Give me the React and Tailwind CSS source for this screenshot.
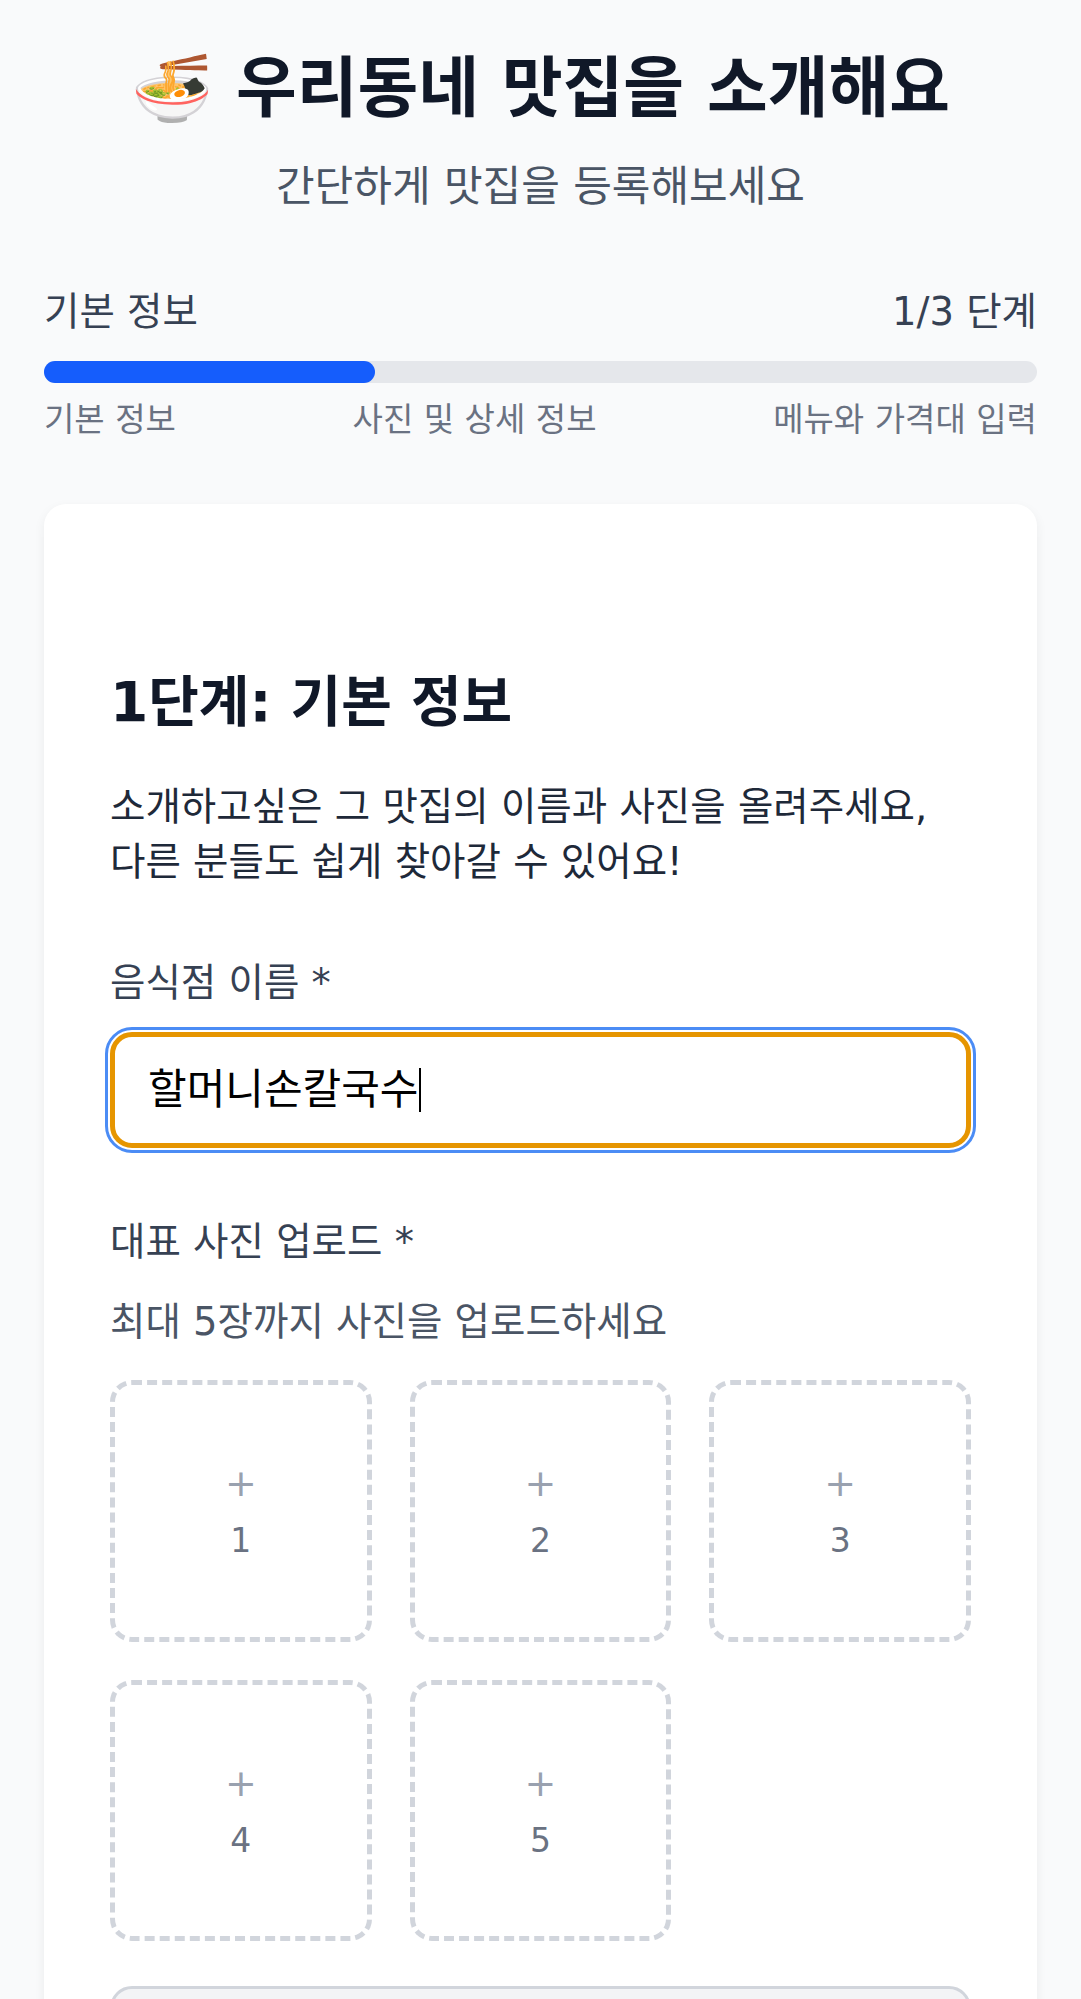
import React from 'react';

const FONT = { fontFamily: '"DejaVu Sans", "Noto Sans CJK KR", sans-serif' };

const steps = ['기본 정보', '사진 및 상세 정보', '메뉴와 가격대 입력'];

const PhotoSlot = ({ index }) => (
  <button
    type="button"
    className="aspect-square rounded-[22px] border-[5px] border-dashed border-gray-300 bg-white flex flex-col items-center justify-center"
  >
    <span className="text-[38px] leading-none text-gray-400">+</span>
    <span className="mt-[22px] text-[33px] leading-none text-gray-500">{index}</span>
  </button>
);

export default function App() {
  return (
    <div className="min-h-screen bg-gray-50 px-[44px] pt-[45px]" style={FONT}>
      <header className="text-center">
        <h1 className="text-[66px] leading-[88px] font-bold text-gray-900">🍜 우리동네 맛집을 소개해요</h1>
        <p className="mt-[22px] text-[42px] leading-[63px] text-gray-600">간단하게 맛집을 등록해보세요</p>
      </header>

      <section className="mt-[66px]">
        <div className="flex justify-between text-[38.5px] leading-[55px] text-gray-700">
          <span>기본 정보</span>
          <span>1/3 단계</span>
        </div>
        <div className="mt-[22px] h-[22px] rounded-full bg-gray-200">
          <div className="h-full w-1/3 rounded-full bg-blue-600" />
        </div>
        <div className="mt-[15px] flex justify-between text-[33px] leading-[44px] text-gray-500">
          {steps.map((s) => (
            <span key={s}>{s}</span>
          ))}
        </div>
      </section>

      <main className="mt-[62px] rounded-[22px] bg-white px-[66px] pt-[160px] pb-[66px] shadow-[0_4px_12px_rgba(0,0,0,0.06)]">
        <h2 className="text-[55px] leading-[77px] font-bold text-gray-900">1단계: 기본 정보</h2>
        <p className="mt-[38px] text-[38.5px] leading-[55px] text-gray-800">
          소개하고싶은 그 맛집의 이름과 사진을 올려주세요, 다른 분들도 쉽게 찾아갈 수 있어요!
        </p>

        <label className="mt-[66px] block text-[38.5px] leading-[55px] text-gray-700">음식점 이름 *</label>
        <div className="mt-[22px] flex h-[116px] items-center rounded-[22px] border-[5.5px] border-[#e69500] bg-white px-[33px] outline-[3px] outline-solid outline-[#4b8cf5] outline-offset-2">
          <span className="text-[42px] leading-none text-black">할머니손칼국수</span>
          <span className="ml-[1px] h-[44px] w-[2px] bg-black" />
        </div>

        <label className="mt-[66px] block text-[38.5px] leading-[55px] text-gray-700">대표 사진 업로드 *</label>
        <p className="mt-[25px] text-[38.5px] leading-[55px] text-gray-600">최대 5장까지 사진을 업로드하세요</p>

        <div className="mt-[31px] grid grid-cols-3 gap-[38px]">
          {[1, 2, 3, 4, 5].map((n) => (
            <PhotoSlot key={n} index={n} />
          ))}
        </div>

        <button
          type="button"
          className="mt-[45px] h-[130px] w-full rounded-[22px] border-[3px] border-gray-300 bg-gray-100 text-[44px] text-gray-400"
        >
          다음 단계
        </button>
      </main>
    </div>
  );
}
